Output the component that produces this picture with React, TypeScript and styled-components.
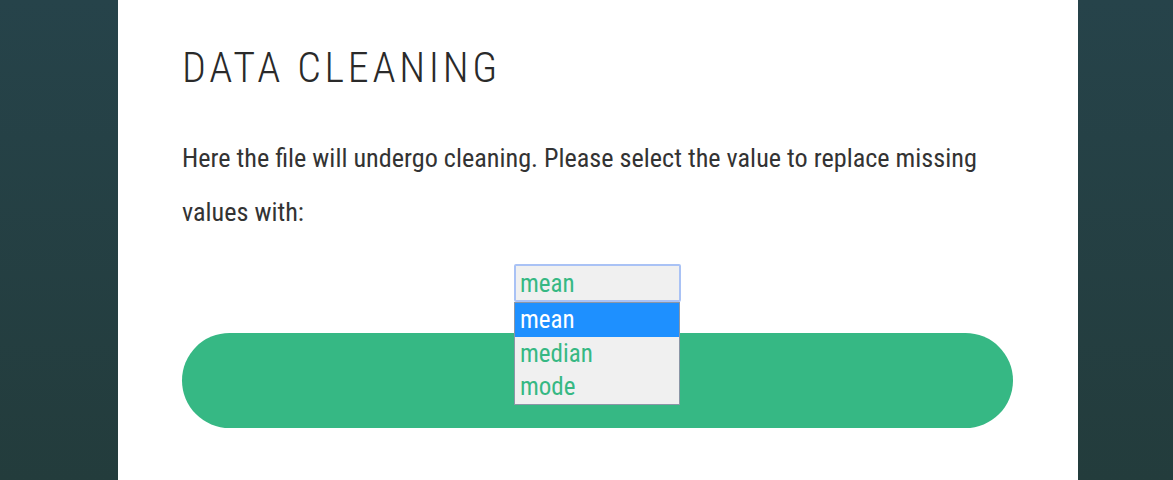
import React, { useState } from "react";
import styled, { createGlobalStyle } from "styled-components";

const FONT = `"Roboto Condensed", "Liberation Sans Narrow", "Arial Narrow", "DejaVu Sans Condensed", sans-serif`;

const Global = createGlobalStyle`
  html, body { margin: 0; padding: 0; }
  body {
    min-height: 480px;
    background: linear-gradient(to bottom, #26434a 0%, #233c3c 100%);
    font-family: ${FONT};
  }
`;

const Page = styled.div`
  display: flex;
  justify-content: flex-start;
  padding-left: 118px;
  min-height: 480px;
`;

const Card = styled.main`
  width: 960px;
  box-sizing: border-box;
  background: #ffffff;
  padding: 47px 65px 52px 64px;
  min-height: 480px;
`;

const Title = styled.h1`
  margin: 0;
  font-family: ${FONT};
  font-weight: 300;
  font-size: 42px;
  line-height: 42px;
  letter-spacing: 3.7px;
  color: #2a2a2a;
`;

const Intro = styled.p`
  margin: 42px 0 0;
  font-size: 26.2px;
  line-height: 54px;
  color: #333333;
`;

const SelectRow = styled.div`
  display: flex;
  justify-content: center;
  margin-top: 25px;
  position: relative;
  z-index: 2;
`;

const SelectWrap = styled.div`
  position: relative;
  width: 167px;
`;

const SelectBox = styled.button`
  display: block;
  width: 167px;
  height: 38px;
  box-sizing: border-box;
  padding: 0 0 0 4px;
  text-align: left;
  background: #f0f0f0;
  border: 2px solid #a9c2f5;
  border-radius: 2px;
  font-family: ${FONT};
  font-size: 25px;
  color: #36b883;
  cursor: pointer;
`;

const List = styled.ul`
  position: absolute;
  left: 0;
  top: 38px;
  width: 166px;
  box-sizing: border-box;
  margin: 0;
  padding: 0;
  list-style: none;
  background: #f0f0f0;
  border: 1px solid #8b96a6;
`;

const Option = styled.li<{ $active?: boolean }>`
  height: 33.6px;
  line-height: 33px;
  padding-left: 5px;
  font-size: 25px;
  color: ${(p) => (p.$active ? "#ffffff" : "#36b883")};
  background: ${(p) => (p.$active ? "#1e90ff" : "transparent")};
  cursor: default;
`;

const CleanButton = styled.button`
  display: block;
  width: 831px;
  height: 95px;
  margin-top: 31px;
  border: none;
  border-radius: 48px;
  background: #36b884;
  position: relative;
  z-index: 1;
`;

const options = ["mean", "median", "mode"];

export default function App() {
  const [value, setValue] = useState("mean");
  return (
    <>
      <Global />
      <Page>
        <Card>
          <Title>DATA CLEANING</Title>
          <Intro>
            Here the file will undergo cleaning. Please select the value to replace missing
            values with:
          </Intro>
          <SelectRow>
            <SelectWrap>
              <SelectBox type="button" aria-haspopup="listbox">{value}</SelectBox>
              <List role="listbox">
                {options.map((o) => (
                  <Option
                    key={o}
                    role="option"
                    aria-selected={o === value}
                    $active={o === value}
                    onClick={() => setValue(o)}
                  >
                    {o}
                  </Option>
                ))}
              </List>
            </SelectWrap>
          </SelectRow>
          <CleanButton type="button" aria-label="Clean data" />
        </Card>
      </Page>
    </>
  );
}
